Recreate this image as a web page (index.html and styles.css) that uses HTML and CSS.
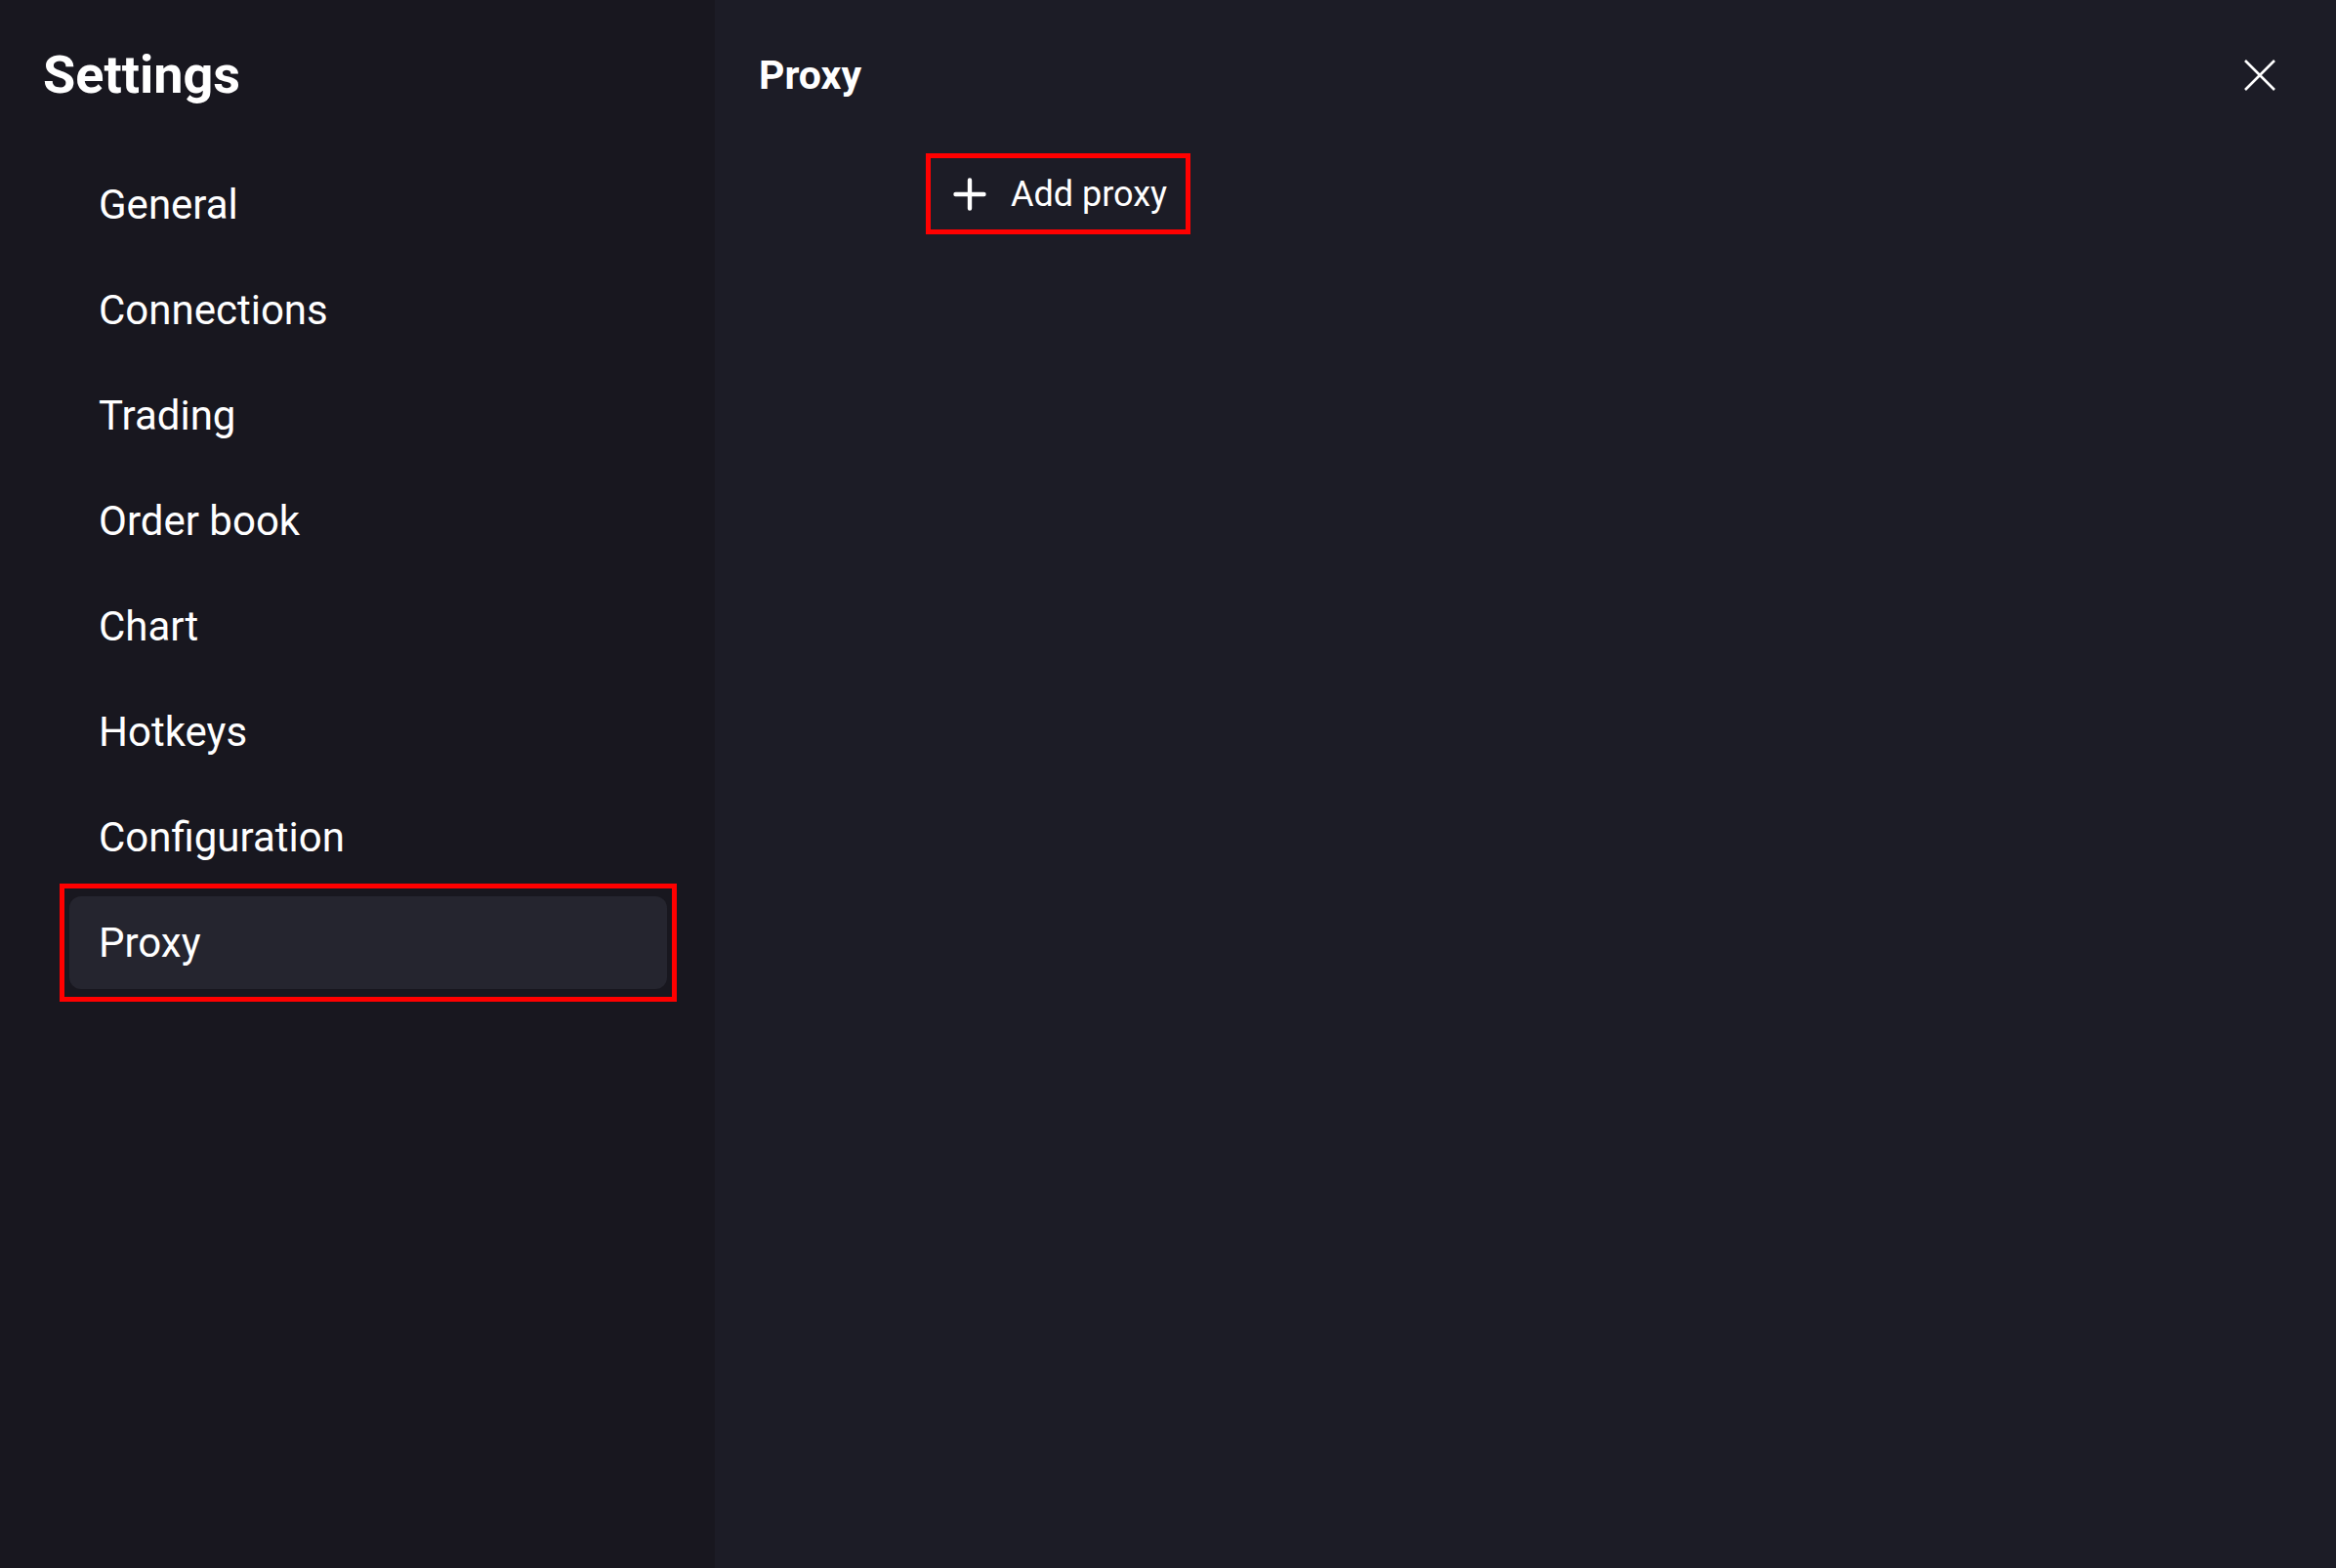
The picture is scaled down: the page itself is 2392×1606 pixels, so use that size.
FILE: index.html
```html
<!DOCTYPE html>
<html lang="en">
<head>
<meta charset="utf-8">
<title>Settings</title>
<link rel="stylesheet" href="styles.css">
</head>
<body>
<div class="app">
  <aside class="sidebar">
    <h1 class="sidebar-title">Settings</h1>
    <nav class="nav">
      <div class="nav-item">General</div>
      <div class="nav-item">Connections</div>
      <div class="nav-item">Trading</div>
      <div class="nav-item">Order book</div>
      <div class="nav-item">Chart</div>
      <div class="nav-item">Hotkeys</div>
      <div class="nav-item">Configuration</div>
      <div class="nav-item active">Proxy</div>
    </nav>
  </aside>
  <main class="main">
    <header class="main-header">
      <h2 class="main-title">Proxy</h2>
      <button class="close-btn" aria-label="Close">
        <svg width="32" height="32" viewBox="0 0 32 32"><path d="M1 1 L31 31 M31 1 L1 31" stroke="#ffffff" stroke-width="2.6" stroke-linecap="butt" fill="none"/></svg>
      </button>
    </header>
    <div class="actions">
      <button class="add-btn">
        <svg class="plus" width="34" height="34" viewBox="0 0 34 34"><path d="M17 2.5 V31.5 M2.5 17 H31.5" stroke="#ffffff" stroke-width="4.4" stroke-linecap="round" fill="none"/></svg>
        <span>Add proxy</span>
      </button>
    </div>
  </main>
</div>
</body>
</html>
```

FILE: styles.css
```css
* { box-sizing: border-box; }
html, body {
  margin: 0;
  padding: 0;
  height: 100%;
}
body {
  font-family: Roboto, "Liberation Sans", sans-serif;
  color: #ffffff;
  background: #1c1c26;
}
.app {
  display: flex;
  width: 2392px;
  height: 1606px;
}
.sidebar {
  width: 732px;
  flex: none;
  background: #18171f;
  padding: 45px 49px 0 44px;
}
.sidebar-title {
  margin: 0;
  font-size: 54px;
  line-height: 64px;
  font-weight: 700;
  color: #ffffff;
}
.nav {
  margin: 53px 0 0 27px;
  display: flex;
  flex-direction: column;
  gap: 13px;
}
.nav-item {
  height: 95px;
  line-height: 95px;
  padding-left: 30px;
  font-size: 42px;
  color: #ffffff;
  border-radius: 12px;
}
.nav-item.active {
  position: relative;
  background: #25252f;
}
.nav-item.active::after {
  content: "";
  position: absolute;
  top: -13px;
  bottom: -13px;
  left: -10px;
  right: -10px;
  border: 5px solid #ff0000;
  pointer-events: none;
}
.main {
  flex: 1;
  background: #1c1c26;
  padding: 53px 62px 0 45px;
}
.main-header {
  display: flex;
  align-items: center;
  justify-content: space-between;
}
.main-title {
  margin: 0;
  font-size: 41px;
  line-height: 48px;
  font-weight: 700;
  color: #ffffff;
}
.close-btn {
  width: 32px;
  height: 32px;
  padding: 0;
  border: 0;
  background: transparent;
  display: flex;
}
.actions {
  margin-top: 61px;
  padding-left: 176px;
  display: flex;
}
.add-btn {
  display: flex;
  align-items: center;
  gap: 25px;
  height: 73px;
  padding: 0 19px 0 23px;
  border: 0;
  background: transparent;
  color: #ffffff;
  font-family: Roboto, "Liberation Sans", sans-serif;
  font-size: 36px;
  outline: 5px solid #ff0000;
  outline-offset: 0;
}
.plus { flex: none; }
```
